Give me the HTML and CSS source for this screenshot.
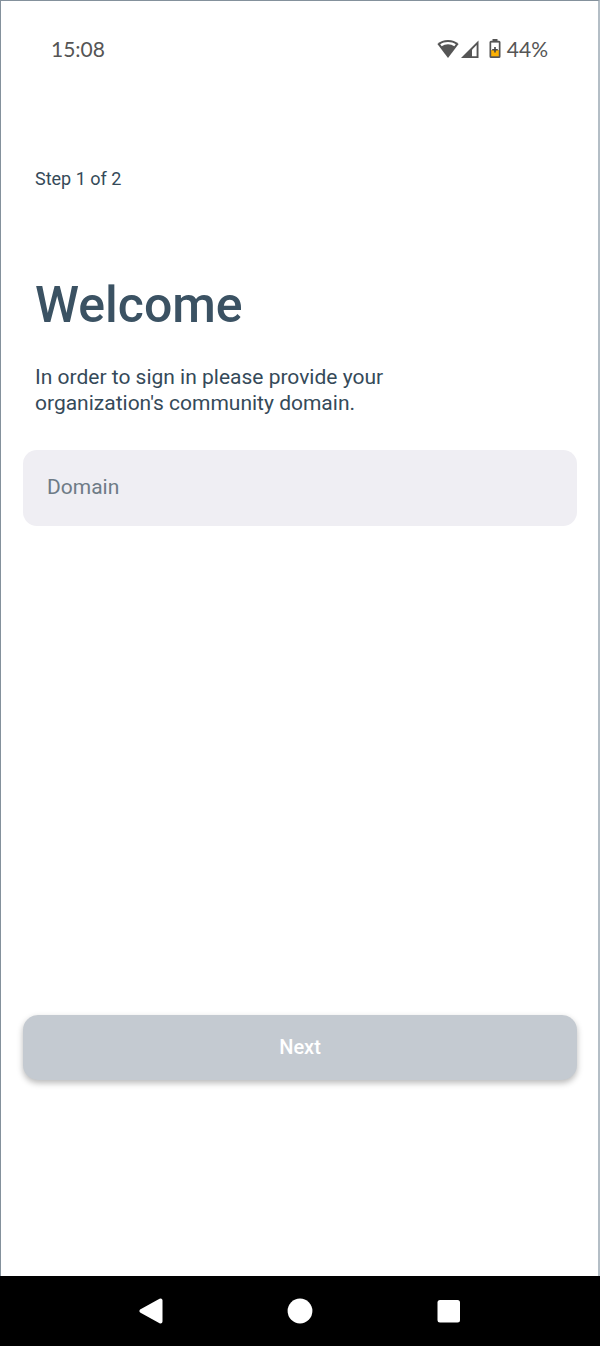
FILE: index.html
```html
<!DOCTYPE html>
<html lang="en">
<head>
    <meta charset="UTF-8">
    <meta name="viewport" content="width=device-width, initial-scale=1.0">
    <title>Welcome</title>
    <link rel="stylesheet" href="styles.css">
</head>
<body>
    <div class="screen">
        <header class="status-bar">
            <span>15:08</span>
            <div class="status-icons">
                <svg class="wifi" width="22" height="20" viewBox="0 0 22 20">
                    <path d="M11 1C6.800 1 3.200 2.500 .4 5L11 19 21.600 5C18.800 2.500 15.200 1 11 1z" fill="#555"/>
                    <path d="M3.200 5.300C5.400 3.700 8 2.900 11 2.900s5.600.8 7.800 2.400l-1.500 2C15.500 6 13.400 5.300 11 5.300S6.500 6 4.700 7.300z" fill="#fff"/>
                </svg>
                <svg class="signal" width="18" height="20" viewBox="0 0 18 20">
                    <path d="M17.500 1.500V19H0z" fill="#555"/>
                    <path d="M15.600 6v11.200H11V10.700z" fill="#fff"/>
                </svg>
                <svg class="battery" width="12" height="20" viewBox="0 0 12 20">
                    <path d="M3.500 0h5v1.800H10q1.500 0 1.500 1.500v14.200Q11.500 19 10 19H2Q.5 19 .5 17.500V3.300Q.5 1.800 2 1.800h1.500z" fill="#555"/>
                    <path d="M2.200 3.600h7.600v7.400H2.200z" fill="#fff"/>
                    <path d="M2.200 11h7.600v6.300H2.200z" fill="#fbb003"/>
                    <path d="M5.200 8h1.600v2h2v1.600h-2v2H5.200v-2h-2V10h2z" fill="#444"/>
                </svg>
                <span>44%</span>
            </div>
        </header>

        <form class="sign-in">
            <p class="step">Step 1 of 2</p>
            <h1>Welcome</h1>
            <label for="domain">In order to sign in please provide your organization's community domain.</label>
            <input type="text" id="domain" name="domain" placeholder="Domain">
            <button type="submit" class="next">Next</button>
        </form>
    </div>

    <nav class="nav-bar">
        <button type="button" aria-label="Back">
            <svg width="26" height="26" viewBox="0 0 26 26">
                <path d="M3.500 13L22.500 2.500v21z" fill="#fff" stroke="#fff" stroke-width="4" stroke-linejoin="round"/>
            </svg>
        </button>
        <button type="button" aria-label="Home">
            <svg width="26" height="26" viewBox="0 0 26 26"><circle cx="13" cy="13" r="12.400" fill="#fff"/></svg>
        </button>
        <button type="button" aria-label="Recent apps">
            <svg width="26" height="26" viewBox="0 0 26 26"><rect x="1.500" y="2" width="22.500" height="22.500" rx="2.500" fill="#fff"/></svg>
        </button>
    </nav>
</body>
</html>
```

FILE: styles.css
```css
* {
    box-sizing: border-box;
}

body {
    display: flex;
    flex-direction: column;
    min-height: 100vh;
    margin: 0;
    background-color: #fff;
    color: #354a59;
    font-family: Roboto, sans-serif;
}

.screen {
    flex: 1;
    display: flex;
    flex-direction: column;
    border: 1px solid #84919c;
    border-right: 2px solid #b4bec6;
    border-bottom: none;
}

.status-bar {
    display: flex;
    justify-content: space-between;
    align-items: center;
    padding: 36px 50px 0;
    color: #555;
    font-family: Lato, sans-serif;
    font-size: 21px;
    line-height: 24px;
}

.status-icons {
    display: flex;
    align-items: center;
}

.signal {
    margin-left: 2px;
}

.battery {
    margin: 0 6px 0 10px;
}

.sign-in {
    flex: 1;
    display: flex;
    flex-direction: column;
    padding: 108px 21px 196px 22px;
}

.step {
    margin: 0 12px;
    font-size: 18px;
    line-height: 20px;
}

h1 {
    margin: 85px 12px 0;
    font-size: 50px;
    font-weight: 500;
    line-height: 62px;
    color: #3b5263;
}

label {
    max-width: 400px;
    margin: 28px 12px 0;
    font-size: 21px;
    line-height: 26px;
}

input {
    width: 100%;
    height: 76px;
    margin-top: 34px;
    padding: 0 24px 2px;
    border: none;
    border-radius: 14px;
    background-color: #efeef3;
    color: #354a59;
    font-family: inherit;
    font-size: 21px;
}

input::placeholder {
    color: #6e7b86;
    opacity: 1;
}

.next {
    width: 100%;
    height: 65px;
    margin-top: auto;
    padding: 0 0 2px;
    border: none;
    border-radius: 15px;
    background-color: #c4cad1;
    box-shadow: 0 3px 6px rgba(0, 0, 0, 0.28);
    color: #fff;
    font-family: inherit;
    font-size: 20px;
    font-weight: 500;
    cursor: pointer;
}

.nav-bar {
    display: flex;
    justify-content: center;
    align-items: center;
    gap: 123px;
    height: 70px;
    background-color: #000;
}

.nav-bar button {
    display: flex;
    padding: 0;
    border: none;
    background: none;
    cursor: pointer;
}
```
